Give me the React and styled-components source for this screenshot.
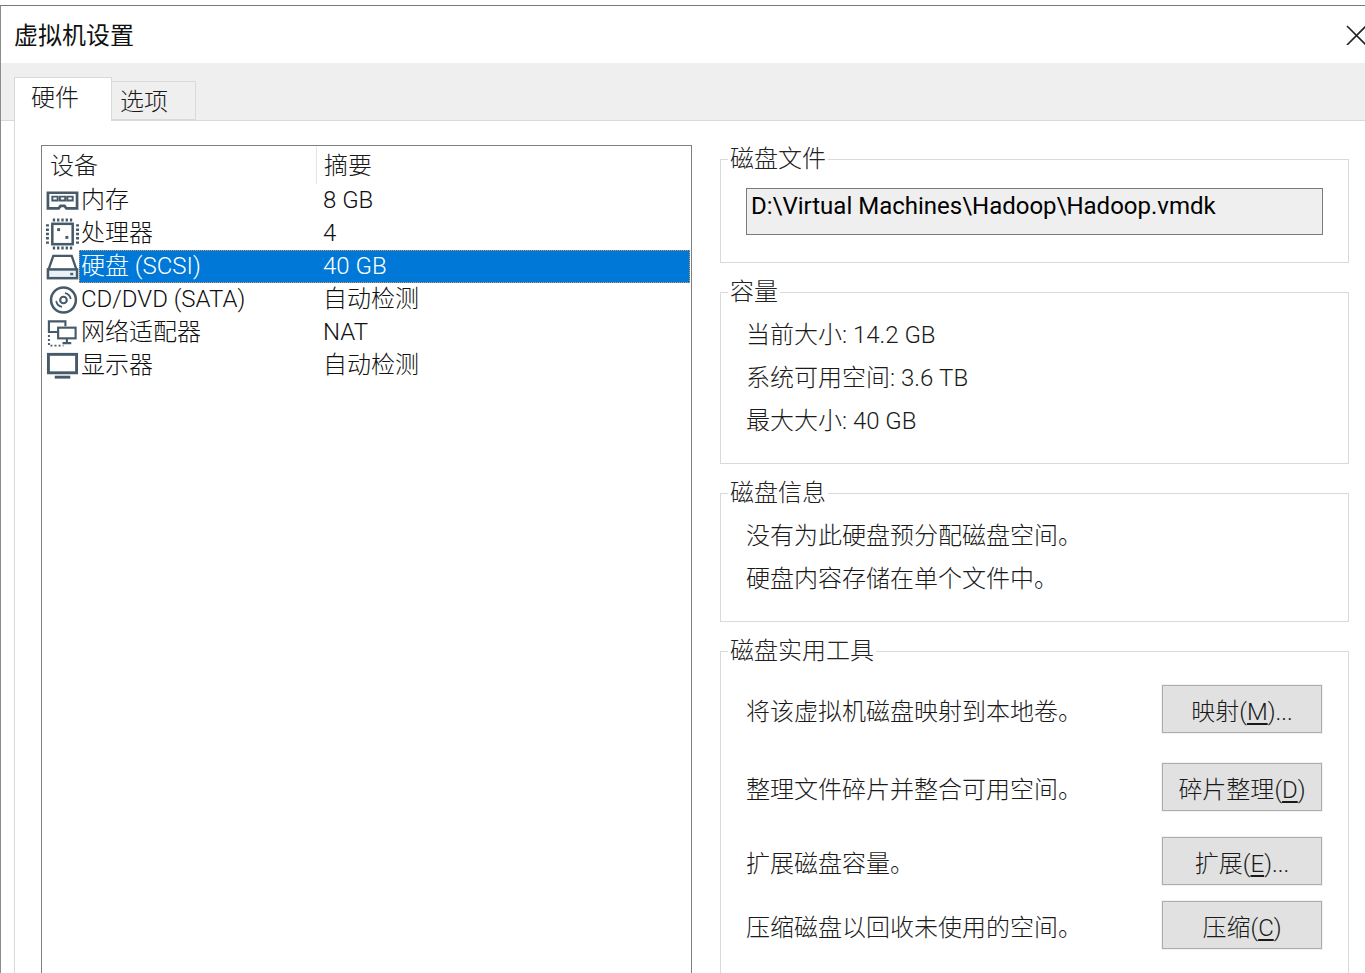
import React from "react";
import styled, { createGlobalStyle } from "styled-components";

const FONT = `Roboto, "Noto Sans CJK SC", sans-serif`;

const GlobalStyle = createGlobalStyle`
  html, body {
    margin: 0;
    padding: 0;
    background: #fff;
    overflow: hidden;
  }
`;

const ICON = "#465a69";

const MemoryIcon = () => (
  <svg width="34" height="24" viewBox="0 0 34 24" fill="none">
    <path d="M2 3.500h30v16H21l-2-2.500h-4l-2 2.500H2z" stroke={ICON} strokeWidth="2.800" />
    <path d="M6.500 7.500h5.500v4H6.500zM14.300 7.500h5.500v4h-5.500zM22 7.500h5.500v4H22z" fill="#fff" stroke={ICON} strokeWidth="2" />
  </svg>
);

const CpuIcon = () => (
  <svg width="34" height="32" viewBox="0 0 34 32" fill="none">
    <rect x="6.500" y="5.500" width="21" height="21" stroke={ICON} strokeWidth="2.600" />
    <path d="M7 1.500h20M7 30.500h20M1.500 6v20M32.500 6v20" stroke={ICON} strokeWidth="3" strokeDasharray="2.400 2" />
    <rect x="11.500" y="10" width="3" height="3" fill={ICON} />
    <rect x="20" y="18" width="3" height="3" fill={ICON} />
  </svg>
);

const DiskIcon = () => (
  <svg width="34" height="28" viewBox="0 0 34 28" fill="none">
    <path d="M2.500 17 7.500 2.500h19l5 14.500" stroke={ICON} strokeWidth="2.400" />
    <rect x="2" y="16.500" width="30" height="9" fill="#eaf2f8" stroke={ICON} strokeWidth="2.600" />
    <rect x="25" y="20" width="3" height="2.500" fill={ICON} />
  </svg>
);

const CdIcon = () => (
  <svg width="34" height="30" viewBox="0 0 34 30" fill="none">
    <circle cx="18" cy="15" r="12.800" stroke={ICON} strokeWidth="2.600" />
    <circle cx="18" cy="15" r="3.400" stroke={ICON} strokeWidth="2.200" />
    <path d="M10.500 16a7.500 7.500 0 0 0 6 6" stroke={ICON} strokeWidth="1.800" />
    <path d="M25.500 14a7.500 7.500 0 0 0-6-6" stroke={ICON} strokeWidth="1.800" />
  </svg>
);

const NetIcon = () => (
  <svg width="34" height="30" viewBox="0 0 34 30" fill="none">
    <path d="M12 14H3V3h17v5" stroke={ICON} strokeWidth="2.200" />
    <rect x="12.500" y="9.500" width="18" height="11" fill="#fff" stroke={ICON} strokeWidth="2.200" />
    <path d="M21.500 21v4M17 25.500h9" stroke={ICON} strokeWidth="2.200" />
    <path d="M3 17v11h15" stroke={ICON} strokeWidth="2" strokeDasharray="2 2.200" />
  </svg>
);

const MonitorIcon = () => (
  <svg width="34" height="28" viewBox="0 0 34 28" fill="none">
    <rect x="2.500" y="2" width="29" height="19" stroke={ICON} strokeWidth="3" />
    <rect x="9" y="24" width="16" height="3" fill={ICON} />
  </svg>
);

const devices = [
  { Icon: MemoryIcon, name: "内存", summary: "8 GB" },
  { Icon: CpuIcon, name: "处理器", summary: "4" },
  { Icon: DiskIcon, name: "硬盘 (SCSI)", summary: "40 GB", selected: true },
  { Icon: CdIcon, name: "CD/DVD (SATA)", summary: "自动检测" },
  { Icon: NetIcon, name: "网络适配器", summary: "NAT" },
  { Icon: MonitorIcon, name: "显示器", summary: "自动检测" },
];

const tools = [
  { text: "将该虚拟机磁盘映射到本地卷。", label: "映射", key: "M", tail: "...", gap: 0 },
  { text: "整理文件碎片并整合可用空间。", label: "碎片整理", key: "D", tail: "", gap: 30 },
  { text: "扩展磁盘容量。", label: "扩展", key: "E", tail: "...", gap: 26 },
  { text: "压缩磁盘以回收未使用的空间。", label: "压缩", key: "C", tail: "", gap: 16 },
];

function App() {
  return (
    <Window>
      <GlobalStyle />
      <TitleBar>
        <Title>虚拟机设置</Title>
        <CloseIcon viewBox="0 0 20 20">
          <path d="M1 1l19 19M20 1L1 20" stroke="#222" strokeWidth="1.600" fill="none" />
        </CloseIcon>
      </TitleBar>
      <TabStrip>
        <Tab $active>硬件</Tab>
        <Tab>选项</Tab>
      </TabStrip>
      <Body>
        <DeviceList>
          <ListHeader>
            <HeadCell $width={274}>设备</HeadCell>
            <HeadCell $divider>摘要</HeadCell>
          </ListHeader>
          {devices.map(({ Icon, name, summary, selected }) => (
            <Row key={name}>
              <IconSlot>
                <Icon />
              </IconSlot>
              <RowBody $selected={selected}>
                <NameCell>{name}</NameCell>
                <span>{summary}</span>
              </RowBody>
            </Row>
          ))}
        </DeviceList>
        <Side>
          <Group $top={15}>
            <Legend>磁盘文件</Legend>
            <PathField>D:\Virtual Machines\Hadoop\Hadoop.vmdk</PathField>
          </Group>
          <Group $top={8} $bottom={20}>
            <Legend>容量</Legend>
            <Line>当前大小: 14.2 GB</Line>
            <Line>系统可用空间: 3.6 TB</Line>
            <Line>最大大小: 40 GB</Line>
          </Group>
          <Group $top={8} $bottom={20}>
            <Legend>磁盘信息</Legend>
            <Line>没有为此硬盘预分配磁盘空间。</Line>
            <Line>硬盘内容存储在单个文件中。</Line>
          </Group>
          <Group $top={20} $bottom={40}>
            <Legend>磁盘实用工具</Legend>
            {tools.map((tool) => (
              <ToolRow key={tool.key} $gap={tool.gap}>
                <span>{tool.text}</span>
                <ToolButton>
                  {tool.label}(<u>{tool.key}</u>){tool.tail}
                </ToolButton>
              </ToolRow>
            ))}
          </Group>
        </Side>
      </Body>
    </Window>
  );
}

const Window = styled.div`
  box-sizing: border-box;
  display: flex;
  flex-direction: column;
  height: 973px;
  margin-top: 5px;
  border-top: 1px solid #777;
  border-left: 1px solid #8c8c8c;
  overflow: hidden;
  font-family: ${FONT};
  font-size: 24px;
  font-weight: 300;
  color: #1a1a1a;
  background: #fff;
`;

const TitleBar = styled.div`
  display: flex;
  align-items: center;
  justify-content: space-between;
  flex: none;
  height: 57px;
  padding-left: 13px;
`;

const Title = styled.div`
  margin-top: -2px;
  font-size: 24px;
  font-weight: 400;
  color: #111;
`;

const CloseIcon = styled.svg`
  width: 20px;
  height: 20px;
  flex: none;
  margin-right: -1px;
`;

const TabStrip = styled.div`
  display: flex;
  align-items: flex-end;
  flex: none;
  box-sizing: border-box;
  height: 58px;
  padding-left: 13px;
  background: #efefef;
  border-bottom: 1px solid #d9d9d9;
`;

const Tab = styled.div`
  box-sizing: border-box;
  height: ${(p) => (p.$active ? "44px" : "39px")};
  width: ${(p) => (p.$active ? "98px" : "84px")};
  margin-bottom: ${(p) => (p.$active ? "-1px" : "0")};
  padding: ${(p) => (p.$active ? "2px 0 0 16px" : "2px 0 0 8px")};
  background: ${(p) => (p.$active ? "#fff" : "#efefef")};
  border: 1px solid #d9d9d9;
  border-bottom: ${(p) => (p.$active ? "none" : "1px solid #d9d9d9")};
  border-left: ${(p) => (p.$active ? "1px solid #d9d9d9" : "none")};
  line-height: 36px;
  z-index: 1;
`;

const Body = styled.div`
  display: flex;
  align-items: stretch;
  gap: 28px;
  flex: 1;
  min-height: 0;
  margin-left: 13px;
  padding: 24px 0 0 26px;
  border-left: 1px solid #d9d9d9;
`;

const DeviceList = styled.div`
  box-sizing: border-box;
  flex: none;
  width: 651px;
  height: 900px;
  border: 1px solid #7f7f7f;
`;

const ListHeader = styled.div`
  display: flex;
  height: 38px;
`;

const HeadCell = styled.div`
  box-sizing: border-box;
  width: ${(p) => (p.$width ? `${p.$width}px` : "auto")};
  flex: ${(p) => (p.$width ? "none" : "1")};
  padding-left: ${(p) => (p.$divider ? "7px" : "8px")};
  line-height: 40px;
  border-left: ${(p) => (p.$divider ? "1px solid #e5e5e5" : "none")};
`;

const Row = styled.div`
  display: flex;
  height: 33px;
  line-height: 33px;
`;

const IconSlot = styled.div`
  display: flex;
  align-items: center;
  flex: none;
  width: 37px;
  padding-left: 4px;
  box-sizing: border-box;
`;

const RowBody = styled.div`
  display: flex;
  flex: 1;
  margin-right: 1px;
  font-size: 24px;
  color: ${(p) => (p.$selected ? "#fff" : "#111")};
  background: ${(p) => (p.$selected ? "#0078d7" : "transparent")};
  outline: ${(p) => (p.$selected ? "1px dotted #d99a5c" : "none")};
  outline-offset: -1px;
`;

const NameCell = styled.span`
  flex: none;
  box-sizing: border-box;
  width: 244px;
  padding-left: 2px;
`;

const Side = styled.div`
  display: flex;
  flex-direction: column;
  gap: 15px;
  flex: none;
  width: 629px;
`;

const Group = styled.fieldset`
  box-sizing: border-box;
  margin: 0;
  min-width: 0;
  padding: ${(p) => p.$top}px 25px ${(p) => p.$bottom || 27}px 25px;
  border: 1px solid #d9d9d9;
`;

const Legend = styled.legend`
  height: 28px;
  margin-left: -18px;
  padding: 0 2px;
  line-height: 28px;
  color: #222;
`;

const PathField = styled.div`
  box-sizing: border-box;
  height: 47px;
  padding: 0 4px;
  line-height: 34px;
  font-weight: 400;
  color: #000;
  background: #efefef;
  border: 1px solid #7a7a7a;
`;

const Line = styled.div`
  height: 43px;
  line-height: 43px;
`;

const ToolRow = styled.div`
  display: flex;
  align-items: center;
  justify-content: space-between;
  height: 48px;
  margin-top: ${(p) => p.$gap}px;
`;

const ToolButton = styled.button`
  box-sizing: border-box;
  flex: none;
  width: 160px;
  height: 48px;
  margin-right: 1px;
  padding: 0;
  font: inherit;
  color: #1a1a1a;
  background: #e1e1e1;
  border: 1px solid #adadad;
  box-shadow: 0 0 0 1px #f2f2f2;

  u {
    text-underline-offset: 3px;
  }
`;

export default App;
